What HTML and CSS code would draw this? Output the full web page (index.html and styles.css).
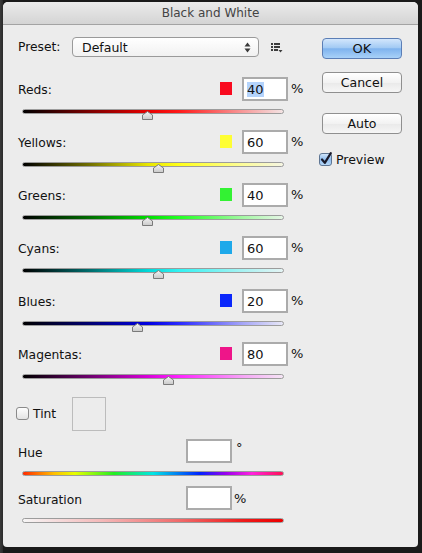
FILE: index.html
```html
<!DOCTYPE html>
<html>
<head>
<meta charset="utf-8">
<title>Black and White</title>
<link rel="stylesheet" href="styles.css">
</head>
<body>
<div class="window">
  <div class="titlebar">Black and White</div>
  <div class="content">
    <div class="main">
      <div class="preset">
        <span class="preset-label">Preset:</span>
        <div class="select">
          <span>Default</span>
          <svg class="updown" width="7" height="11" viewBox="0 0 7 11"><path d="M0.5 4.5 L3.5 0.5 L6.5 4.5 Z M0.5 6.5 L3.5 10.5 L6.5 6.5 Z" fill="#3a3a3a"/></svg>
        </div>
        <svg class="listicon" width="12" height="10" viewBox="0 0 12 10"><g fill="#3c3c3c"><rect x="0" y="0" width="2" height="2"/><rect x="3" y="0" width="6" height="2"/><rect x="0" y="3" width="2" height="2"/><rect x="3" y="3" width="6" height="2"/><rect x="0" y="6" width="2" height="2"/><rect x="3" y="6" width="4" height="2"/><path d="M7.5 7 L11.5 7 L9.5 9.5 Z"/></g></svg>
      </div>

      <div class="block">
        <div class="crow"><span class="lbl">Reds:</span><span class="sw sw-red"></span><div class="num"><span class="sel">40</span></div><span class="pct">%</span></div>
        <div class="slider"><div class="track tr-red"></div><svg class="thumb" style="left:120px" width="11" height="9" viewBox="0 0 11 9"><defs><linearGradient id="tg1" x1="0" y1="0" x2="0" y2="1"><stop offset="0" stop-color="#f4f4f4"/><stop offset="1" stop-color="#c9c9c9"/></linearGradient></defs><path d="M0.5 4 L5.5 0.5 L10.5 4 L10.5 8.5 L0.5 8.5 Z" fill="url(#tg1)" stroke="#7a7a7a"/></svg></div>
      </div>
      <div class="block">
        <div class="crow"><span class="lbl">Yellows:</span><span class="sw sw-yellow"></span><div class="num">60</div><span class="pct">%</span></div>
        <div class="slider"><div class="track tr-yellow"></div><svg class="thumb" style="left:131px" width="11" height="9" viewBox="0 0 11 9"><path d="M0.5 4 L5.5 0.5 L10.5 4 L10.5 8.5 L0.5 8.5 Z" fill="url(#tg1)" stroke="#7a7a7a"/></svg></div>
      </div>
      <div class="block">
        <div class="crow"><span class="lbl">Greens:</span><span class="sw sw-green"></span><div class="num">40</div><span class="pct">%</span></div>
        <div class="slider"><div class="track tr-green"></div><svg class="thumb" style="left:120px" width="11" height="9" viewBox="0 0 11 9"><path d="M0.5 4 L5.5 0.5 L10.5 4 L10.5 8.5 L0.5 8.5 Z" fill="url(#tg1)" stroke="#7a7a7a"/></svg></div>
      </div>
      <div class="block">
        <div class="crow"><span class="lbl">Cyans:</span><span class="sw sw-cyan"></span><div class="num">60</div><span class="pct">%</span></div>
        <div class="slider"><div class="track tr-cyan"></div><svg class="thumb" style="left:131px" width="11" height="9" viewBox="0 0 11 9"><path d="M0.5 4 L5.5 0.5 L10.5 4 L10.5 8.5 L0.5 8.5 Z" fill="url(#tg1)" stroke="#7a7a7a"/></svg></div>
      </div>
      <div class="block">
        <div class="crow"><span class="lbl">Blues:</span><span class="sw sw-blue"></span><div class="num">20</div><span class="pct">%</span></div>
        <div class="slider"><div class="track tr-blue"></div><svg class="thumb" style="left:110px" width="11" height="9" viewBox="0 0 11 9"><path d="M0.5 4 L5.5 0.5 L10.5 4 L10.5 8.5 L0.5 8.5 Z" fill="url(#tg1)" stroke="#7a7a7a"/></svg></div>
      </div>
      <div class="block">
        <div class="crow"><span class="lbl">Magentas:</span><span class="sw sw-magenta"></span><div class="num">80</div><span class="pct">%</span></div>
        <div class="slider"><div class="track tr-magenta"></div><svg class="thumb" style="left:141px" width="11" height="9" viewBox="0 0 11 9"><path d="M0.5 4 L5.5 0.5 L10.5 4 L10.5 8.5 L0.5 8.5 Z" fill="url(#tg1)" stroke="#7a7a7a"/></svg></div>
      </div>

      <div class="tint">
        <svg class="cb cb-tint" width="13" height="13" viewBox="0 0 13 13"><defs><linearGradient id="cbg" x1="0" y1="0" x2="0" y2="1"><stop offset="0" stop-color="#ffffff"/><stop offset="1" stop-color="#e2e2e2"/></linearGradient></defs><rect x="0.5" y="0.5" width="12" height="12" rx="2.5" fill="url(#cbg)" stroke="#8a8a8a"/></svg>
        <span class="tint-label">Tint</span>
        <div class="tint-swatch"></div>
      </div>

      <div class="hrow"><span class="hlbl">Hue</span><div class="num"></div><span class="deg">°</span></div>
      <div class="slider short"><div class="track tr-hue"></div></div>
      <div class="hrow"><span class="hlbl">Saturation</span><div class="num"></div><span class="spct">%</span></div>
      <div class="slider"><div class="track tr-sat"></div></div>
    </div>

    <div class="side">
      <div class="btn btn-ok">OK</div>
      <div class="btn btn-cancel">Cancel</div>
      <div class="btn btn-auto">Auto</div>
      <div class="preview">
        <svg class="cb" width="14" height="14" viewBox="0 0 14 14"><defs><linearGradient id="cbb" x1="0" y1="0" x2="0" y2="1"><stop offset="0" stop-color="#d6e8fb"/><stop offset="0.5" stop-color="#8fbef0"/><stop offset="1" stop-color="#b9d9f8"/></linearGradient></defs><rect x="0.5" y="1.5" width="12" height="12" rx="2.5" fill="url(#cbb)" stroke="#5f7693"/><path d="M3 7.5 L5.8 10.8 L11.8 1.2" fill="none" stroke="#1a1a2a" stroke-width="2.2" stroke-linecap="round" stroke-linejoin="round"/></svg>
        <span class="preview-label">Preview</span>
      </div>
    </div>
  </div>
</div>
</body>
</html>
```
FILE: styles.css
```css
html, body {
  margin: 0;
  padding: 0;
}
body {
  width: 422px;
  height: 553px;
  background: linear-gradient(to right, #3a3a3a 0px, #2a2a2a 3px, #1a1a1a 3px);
  font-family: "DejaVu Sans", "Liberation Sans", sans-serif;
  font-size: 12.3px;
  color: #111;
  overflow: hidden;
}
.window {
  position: relative;
  margin: 2px 0 0 3px;
  width: 415px;
  height: 545px;
  background: #ececec;
  border-radius: 5px 5px 4px 4px;
  box-sizing: border-box;
  overflow: hidden;
  display: flex;
  flex-direction: column;
}
.titlebar {
  height: 22px;
  line-height: 23px;
  text-align: center;
  font-size: 12px;
  color: #444;
  background: linear-gradient(#ebebeb, #d4d4d4);
  border-bottom: 1px solid #a3a3a3;
  flex: none;
}
.content {
  display: flex;
  padding: 12px 0 0 15px;
}
.main {
  width: 285px;
  display: flex;
  flex-direction: column;
}
.preset {
  display: flex;
  align-items: center;
  height: 20px;
  margin-bottom: 20px;
}
.preset-label {
  width: 54px;
}
.select {
  box-sizing: border-box;
  width: 187px;
  height: 20px;
  border: 1px solid #9a9a9a;
  border-radius: 4px;
  background: linear-gradient(#ffffff, #f1f1f1);
  display: flex;
  align-items: center;
  justify-content: space-between;
  padding: 0 7px 0 9px;
  font-size: 12.5px;
}
.updown {
  display: block;
}
.listicon {
  margin-left: 12px;
  margin-top: 1px;
}
.block {
  height: 53px;
  display: flex;
  flex-direction: column;
}
.crow, .hrow {
  display: flex;
  align-items: center;
  height: 24px;
}
.lbl {
  flex: 1;
  padding-top: 2px;
}
.sw {
  width: 12px;
  height: 13px;
  margin-top: -2px;
}
.sw-red { background: #f90a1f; }
.sw-yellow { background: #fefe33; }
.sw-green { background: #33f233; }
.sw-cyan { background: #1ea9ea; }
.sw-blue { background: #0a27fb; }
.sw-magenta { background: #ee1589; }
.num {
  box-sizing: border-box;
  width: 46px;
  height: 24px;
  margin-left: 10px;
  border: 2px solid #ababab;
  background: #fff;
  padding: 3px 0 0 3px;
  font-size: 13px;
  line-height: 16px;
}
.sel {
  background: #b4d3fb;
}
.pct {
  width: 12px;
  margin-left: 3px;
  margin-top: -1px;
  font-size: 13px;
}
.slider {
  position: relative;
  margin-top: 8px;
  margin-left: 4px;
  width: 262px;
  height: 21px;
}
.slider.short {
  height: 15px;
}
.track {
  box-sizing: border-box;
  height: 5px;
  border: 1px solid #9c9c9c;
  border-radius: 3px;
}
.tr-red { background: linear-gradient(to right, #000 0%, #7a0000 25%, #e60000 48%, #ff1a1a 60%, #f79b9b 85%, #f3e4e4 100%); }
.tr-yellow { background: linear-gradient(to right, #000 0%, #6e6c00 25%, #e8e600 48%, #ffff1a 60%, #fcfc9c 85%, #f5f5e3 100%); }
.tr-green { background: linear-gradient(to right, #000 0%, #006a00 25%, #00dc00 48%, #22ff22 60%, #a5f8a5 85%, #e6f5e6 100%); }
.tr-cyan { background: linear-gradient(to right, #000 0%, #006a6a 25%, #00d8d8 48%, #33f2f2 60%, #a9f2f2 85%, #e5f4f4 100%); }
.tr-blue { background: linear-gradient(to right, #000 0%, #00006e 25%, #0000e0 48%, #2a2aff 60%, #a8a8f8 85%, #e7e7f6 100%); }
.tr-magenta { background: linear-gradient(to right, #000 0%, #6a006a 25%, #d800d8 48%, #ff22ff 60%, #f7a7f7 85%, #f4e5f4 100%); }
.tr-hue { background: linear-gradient(to right, #ff2a00 0%, #ffbf00 12%, #e6ff00 20%, #22ee22 35%, #00e5e5 50%, #0022ff 68%, #9900ee 78%, #ff22dd 88%, #ff1155 100%); }
.tr-sat { background: linear-gradient(to right, #f6f6f6 0%, #f4b9b9 30%, #f06b6b 60%, #ee1a1a 85%, #ec0000 100%); }
.thumb {
  position: absolute;
  top: 2px;
}
.tint {
  display: flex;
  align-items: center;
  height: 35px;
  margin-top: 1px;
  margin-bottom: 8px;
}
.cb-tint {
  margin-left: -2px;
}
.tint-label {
  margin-left: 4px;
  width: 39px;
}
.tint-swatch {
  box-sizing: border-box;
  width: 34px;
  height: 34px;
  border: 1px solid #bcbcbc;
  background: #ececec;
}
.hlbl {
  width: 158px;
  padding-top: 3px;
}
.deg {
  margin-left: 4px;
  margin-top: -8px;
  font-size: 13px;
}
.spct {
  margin-left: 2px;
  font-size: 13px;
}
.side {
  margin-left: 19px;
  padding-top: 1px;
  width: 80px;
  display: flex;
  flex-direction: column;
}
.btn {
  box-sizing: border-box;
  width: 80px;
  height: 21px;
  border: 1px solid #8f8f8f;
  border-radius: 4px;
  background: linear-gradient(#ffffff, #f2f2f2 50%, #e9e9e9 51%, #f6f6f6);
  text-align: center;
  line-height: 19px;
  font-size: 12.5px;
}
.btn-ok {
  border-color: #5b7eb6;
  background: linear-gradient(#d3e6fc, #a4cbf4 45%, #7fb3ee 52%, #a8d1f8);
  font-size: 13px;
}
.btn-cancel { margin-top: 13px; }
.btn-auto { margin-top: 20px; }
.preview {
  display: flex;
  align-items: center;
  margin-top: 17px;
  margin-left: -3px;
  height: 16px;
}
.preview-label {
  margin-left: 3px;
  font-size: 12.5px;
}
```
